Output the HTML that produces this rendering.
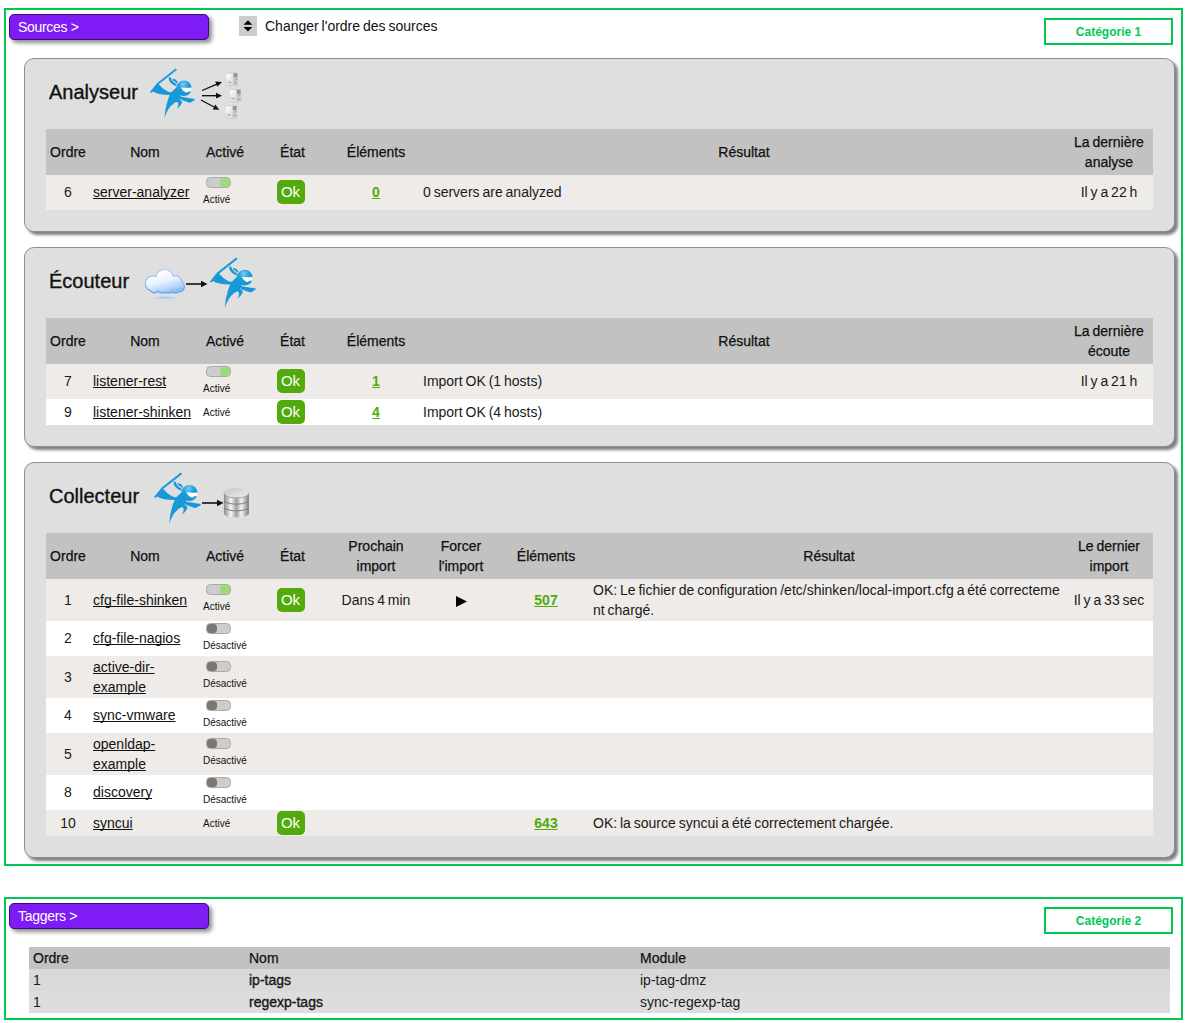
<!DOCTYPE html>
<html><head><meta charset="utf-8">
<style>
*{box-sizing:border-box}
html,body{margin:0;padding:0;background:#fff;width:1198px;height:1023px;overflow:hidden}
body{font-family:"Liberation Sans",sans-serif;font-size:14px;line-height:20px;color:#1a1a1a;position:relative;word-spacing:-1px}
.box{position:absolute;left:4px;width:1179px;border:2px solid #00c853}
.btn{position:absolute;left:9px;width:200px;height:26px;background:#7f1cf6;border:1px solid #3c0a7c;border-radius:5px;box-shadow:3px 3px 4px rgba(0,0,0,.45);color:#fff;font-size:14px;line-height:20px;padding:2px 0 0 8px;word-spacing:0;letter-spacing:-0.3px}
.cat{word-spacing:0;position:absolute;left:1044px;width:129px;height:27px;border:2px solid #00c853;color:#00c853;font-weight:bold;font-size:12px;line-height:20px;text-align:center;padding-top:2px}
.panel{position:absolute;left:24px;width:1151px;background:#dfdfdf;border:1px solid #8f8f8f;border-radius:10px;box-shadow:3px 3px 3px rgba(0,0,0,.5)}
.ptitle{position:absolute;left:24px;font-size:20px;line-height:24px;color:#111;-webkit-text-stroke:0.35px #111}
.icon{position:absolute}
table.src{position:absolute;left:21px;width:1107px;border-collapse:collapse;table-layout:fixed}
table.src th{-webkit-text-stroke:0.25px #111;background:#c2c2c2;font-weight:normal;height:46px;padding:0;vertical-align:middle;text-align:center;color:#111}
table.src td{padding:0;vertical-align:middle;text-align:center}
table.src tr.s td{background:#efebe8}
table.src tr.w td{background:#fff}
td.nm{text-align:left !important;padding-left:3px !important}
td.nm a{color:#111;text-decoration:underline;text-underline-offset:1px;text-decoration-skip-ink:none}
td.res{text-align:left !important;padding-left:6px !important}
tr.h35 td{padding-bottom:1px}
tr.h35 td.act{padding-bottom:0}
tr.h35 td.st{padding-bottom:1px}
tr.h42 td.act{padding-bottom:1px}
td.act{text-align:left !important;padding-left:3px !important}
.tg{display:block;width:25px;height:11px;margin:1px 0 2px 3px;border:1px solid #a9a9a9;border-radius:4.5px;background:#cdcdcd;position:relative}
.tg i{position:absolute;top:0;width:10px;height:9px;border-radius:3.5px}
.tg.on i{right:0;background:#9ddb78}
.tg.off i{left:0;background:#7b7670}
.lab{display:block;font-size:10px;line-height:19px;color:#111}
.ok{position:relative;left:-2px;display:inline-block;width:28px;height:24px;background:#52aa0c;border-radius:5px;color:#fff;font-size:15px;line-height:24px;text-align:center;vertical-align:middle}
a.num{color:#52aa0c;font-weight:bold;text-decoration:underline;text-decoration-skip-ink:none}
table.tag{position:absolute;left:23px;top:48px;width:1141px;border-collapse:collapse;table-layout:fixed}
table.tag th{-webkit-text-stroke:0.25px #111;background:#c2c2c2;font-weight:normal;text-align:left;height:22px;padding:0 0 0 4px;color:#111;line-height:20px}
table.tag td{height:22px;padding:0 0 0 4px;line-height:20px}
table.tag tr.r1 td{background:#d9d9d9}
td.md{-webkit-text-stroke:0.35px #111}
table.tag tr.r2 td{background:#dddddd}
</style></head>
<body>
<svg width="0" height="0" style="position:absolute">
<defs>
<radialGradient id="hg" cx="0.45" cy="0.25" r="0.75"><stop offset="0" stop-color="#7fcdf2"/><stop offset="0.45" stop-color="#1e9edc"/><stop offset="1" stop-color="#1593d2"/></radialGradient>
<linearGradient id="cg" x1="0" y1="0" x2="0" y2="1"><stop offset="0" stop-color="#ffffff"/><stop offset="0.55" stop-color="#e4efff"/><stop offset="1" stop-color="#9cc3fb"/></linearGradient>
<radialGradient id="cs" cx="0.5" cy="0.5" r="0.5"><stop offset="0" stop-color="#8fb8f6"/><stop offset="1" stop-color="#dfdfdf" stop-opacity="0"/></radialGradient>
<linearGradient id="dbg" x1="0" y1="0" x2="1" y2="0"><stop offset="0" stop-color="#8a8a8a"/><stop offset="0.12" stop-color="#b5b5b5"/><stop offset="0.28" stop-color="#f6f6f6"/><stop offset="0.5" stop-color="#a0a0a0"/><stop offset="0.7" stop-color="#f2f2f2"/><stop offset="0.9" stop-color="#a5a5a5"/><stop offset="1" stop-color="#7c7c7c"/></linearGradient>
<linearGradient id="dbt" x1="0" y1="0" x2="1" y2="1"><stop offset="0" stop-color="#c4c4c4"/><stop offset="0.6" stop-color="#dedede"/><stop offset="1" stop-color="#ececec"/></linearGradient>
<symbol id="ninja" viewBox="0 0 55 55">
<g fill="#1799d8">
<path d="M31.2 2.5 L32.6 3.9 L13.6 18.9 L11.9 17.7 Z"/>
<path d="M12.2 17.6 L14.2 18.8 Q17.5 23 22.6 25.8 Q25 26.9 27.2 26.6 L28.5 25 L32.5 21.5 L37 31.5 L35 33.6 Q38.3 36 37.6 37.8 Q36 41.2 32.4 43.8 Q34.3 40.2 34 37.9 Q33.4 36.6 32 36.6 Q28.5 37.8 24.4 43 Q21.6 47.5 19.8 53 Q20.4 43.5 23.2 34.6 L25.2 29.4 Q20.5 29.6 15.6 28.8 Q11 27.9 8 26 L6.4 27.4 L5 26.4 Z"/>
<path d="M34.8 31 Q43 32.3 50.9 33.5 L50.5 34.8 Q48.8 35.4 47.6 36.4 Q46.2 37.6 44.9 37.3 Q41 36 36.2 34.2 Z"/>
<path d="M24.4 11.2 Q26.6 11 26.8 13 Q27.6 16 32.2 18.4 L31.6 20.4 Q26 18.4 24.3 14 Z"/>
<path d="M28.3 13 Q30.9 12.6 33.4 16.2 L32.3 17.8 Q30.6 15.3 28.3 14.8 Z"/>
</g>
<circle cx="39.7" cy="22.6" r="7.9" fill="url(#hg)"/>
<path d="M36.6 21.8 Q42 22.6 47.7 22 Q48 24.8 46.7 25.6 Q45.4 26.2 44.6 25.6 Q43.6 27.4 41.8 27 Q38.5 25.8 36.6 21.8 Z" fill="#fff"/>
</symbol>
<symbol id="srv" viewBox="0 0 14 14">
<linearGradient id="sfg" x1="0" y1="0" x2="1" y2="1"><stop offset="0" stop-color="#ffffff"/><stop offset="1" stop-color="#dcdcdc"/></linearGradient>
<ellipse cx="8" cy="13.2" rx="6" ry="0.8" fill="#c4c4c4"/>
<path d="M0.4 1.6 Q0.4 0.6 1.6 0.5 L12 0.3 Q13 0.4 13 1.4 L13 12.6 Q13 13.4 12 13.4 L1.4 13.4 Q0.4 13.4 0.4 12.4 Z" fill="#d2d2d2"/>
<rect x="1.2" y="1.6" width="7" height="7.4" fill="url(#sfg)"/>
<rect x="1.2" y="9" width="7" height="3.6" fill="#e6e6e6"/>
<rect x="2.2" y="10" width="5" height="0.6" fill="#a8a8a8"/>
<rect x="4.4" y="9.6" width="1" height="1.2" fill="#777"/>
<rect x="8.5" y="1.2" width="3.8" height="4.2" fill="#939393"/>
<rect x="8.5" y="5.4" width="3.8" height="7.2" fill="#c9c9c9"/>
<rect x="10.4" y="5.8" width="1.6" height="1.8" fill="#8fbf8f"/>
<rect x="8.5" y="10.4" width="3.8" height="1" fill="#a5a5a5"/>
</symbol>
</defs></svg>

<div class="box" style="top:8px;height:858px">
  <div class="btn" style="left:3px;top:4px">Sources &gt;</div>
  <div style="position:absolute;left:233px;top:6px;width:18px;height:20px;background:#ccc">
    <svg width="18" height="20" viewBox="0 0 18 20" style="position:absolute;left:0;top:0"><path d="M4.5 8.7 L9 4.3 L13.2 8.7 Z M4.5 11 L13.2 11 L9 15.4 Z" fill="#000"/></svg>
  </div>
  <div style="position:absolute;left:259px;top:6px;font-size:14px;line-height:20px;color:#111">Changer l'ordre des sources</div>
  <div class="cat" style="left:1038px;top:8px">Catégorie 1</div>
</div>

<!-- Panel 1: Analyseur -->
<div class="panel" style="top:58px;height:174px">
  <div class="ptitle" style="top:21px">Analyseur</div>
  <table class="src" style="top:70px">
    <colgroup><col style="width:44px"><col style="width:110px"><col style="width:50px"><col style="width:85px"><col style="width:82px"><col style="width:648px"><col style="width:88px"></colgroup>
    <tr><th>Ordre</th><th>Nom</th><th>Activé</th><th>État</th><th>Éléments</th><th style="padding-left:6px">Résultat</th><th>La dernière<br>analyse</th></tr>
    <tr class="s h35" style="height:35px"><td>6</td><td class="nm"><a>server-analyzer</a></td><td class="act"><span class="tg on"><i></i></span><span class="lab">Activé</span></td><td class="st"><span class="ok">Ok</span></td><td><a class="num">0</a></td><td class="res">0 servers are analyzed</td><td>Il y a 22 h</td></tr>
  </table>
</div>

<!-- Panel 2: Ecouteur -->
<div class="panel" style="top:247px;height:200px">
  <div class="ptitle" style="top:21px">Écouteur</div>
  <table class="src" style="top:70px">
    <colgroup><col style="width:44px"><col style="width:110px"><col style="width:50px"><col style="width:85px"><col style="width:82px"><col style="width:648px"><col style="width:88px"></colgroup>
    <tr><th>Ordre</th><th>Nom</th><th>Activé</th><th>État</th><th>Éléments</th><th style="padding-left:6px">Résultat</th><th>La dernière<br>écoute</th></tr>
    <tr class="s h35" style="height:35px"><td>7</td><td class="nm"><a>listener-rest</a></td><td class="act"><span class="tg on"><i></i></span><span class="lab">Activé</span></td><td class="st"><span class="ok">Ok</span></td><td><a class="num">1</a></td><td class="res">Import OK (1 hosts)</td><td>Il y a 21 h</td></tr>
    <tr class="w" style="height:26px"><td>9</td><td class="nm"><a>listener-shinken</a></td><td class="act"><span class="lab">Activé</span></td><td class="st"><span class="ok">Ok</span></td><td><a class="num">4</a></td><td class="res">Import OK (4 hosts)</td><td></td></tr>
  </table>
</div>

<!-- Panel 3: Collecteur -->
<div class="panel" style="top:462px;height:396px">
  <div class="ptitle" style="top:21px">Collecteur</div>
  <table class="src" style="top:70px">
    <colgroup><col style="width:44px"><col style="width:110px"><col style="width:50px"><col style="width:85px"><col style="width:82px"><col style="width:88px"><col style="width:82px"><col style="width:478px"><col style="width:88px"></colgroup>
    <tr><th>Ordre</th><th>Nom</th><th>Activé</th><th>État</th><th>Prochain<br>import</th><th>Forcer<br>l'import</th><th>Éléments</th><th style="padding-left:6px">Résultat</th><th>Le dernier<br>import</th></tr>
    <tr class="s h42" style="height:42px"><td>1</td><td class="nm"><a>cfg-file-shinken</a></td><td class="act"><span class="tg on"><i></i></span><span class="lab">Activé</span></td><td class="st"><span class="ok">Ok</span></td><td>Dans 4 min</td><td><svg width="11" height="11" viewBox="0 0 11 11" style="vertical-align:middle"><path d="M0 0 L11 5.5 L0 11 Z" fill="#000"/></svg></td><td><a class="num">507</a></td><td class="res" style="white-space:nowrap">OK: Le fichier de configuration /etc/shinken/local-import.cfg a été correcteme<br>nt chargé.</td><td>Il y a 33 sec</td></tr>
    <tr class="w h35" style="height:35px"><td>2</td><td class="nm"><a>cfg-file-nagios</a></td><td class="act"><span class="tg off"><i></i></span><span class="lab">Désactivé</span></td><td></td><td></td><td></td><td></td><td></td><td></td></tr>
    <tr class="s h42" style="height:42px"><td>3</td><td class="nm"><a>active-dir-<br>example</a></td><td class="act"><span class="tg off"><i></i></span><span class="lab">Désactivé</span></td><td></td><td></td><td></td><td></td><td></td><td></td></tr>
    <tr class="w h35" style="height:35px"><td>4</td><td class="nm"><a>sync-vmware</a></td><td class="act"><span class="tg off"><i></i></span><span class="lab">Désactivé</span></td><td></td><td></td><td></td><td></td><td></td><td></td></tr>
    <tr class="s h42" style="height:42px"><td>5</td><td class="nm"><a>openldap-<br>example</a></td><td class="act"><span class="tg off"><i></i></span><span class="lab">Désactivé</span></td><td></td><td></td><td></td><td></td><td></td><td></td></tr>
    <tr class="w h35" style="height:35px"><td>8</td><td class="nm"><a>discovery</a></td><td class="act"><span class="tg off"><i></i></span><span class="lab">Désactivé</span></td><td></td><td></td><td></td><td></td><td></td><td></td></tr>
    <tr class="s" style="height:26px"><td>10</td><td class="nm"><a>syncui</a></td><td class="act"><span class="lab">Activé</span></td><td class="st"><span class="ok">Ok</span></td><td></td><td></td><td><a class="num">643</a></td><td class="res">OK: la source syncui a été correctement chargée.</td><td></td></tr>
  </table>
</div>

<div class="box" style="top:897px;height:123px">
  <div class="btn" style="left:3px;top:4px">Taggers &gt;</div>
  <div class="cat" style="left:1038px;top:8px">Catégorie 2</div>
  <table class="tag">
    <colgroup><col style="width:216px"><col style="width:391px"><col style="width:534px"></colgroup>
    <tr><th>Ordre</th><th>Nom</th><th>Module</th></tr>
    <tr class="r1"><td>1</td><td class="md">ip-tags</td><td>ip-tag-dmz</td></tr>
    <tr class="r2"><td>1</td><td class="md">regexp-tags</td><td>sync-regexp-tag</td></tr>
  </table>
</div>


<!-- icons -->
<svg class="icon" style="left:145px;top:66px" width="54" height="54"><use href="#ninja" width="54" height="54"/></svg>
<svg class="icon" style="left:199px;top:70px" width="45" height="50" viewBox="0 0 45 50">
<g stroke="#111" stroke-width="1.35" fill="none"><line x1="3" y1="20.5" x2="18" y2="14.2"/><line x1="3" y1="25.7" x2="18" y2="25.7"/><line x1="2" y1="30" x2="15" y2="37"/></g>
<g fill="#111"><path d="M23 12 L16.2 11.6 L18.3 16.8 Z"/><path d="M23 25.7 L17 22.8 L17 28.6 Z"/><path d="M20.2 39.8 L16.3 34.6 L13.8 39.4 Z"/></g>
<use href="#srv" x="26" y="2" width="14" height="14"/>
<use href="#srv" x="29.3" y="18.5" width="14" height="14"/>
<use href="#srv" x="25.3" y="34.8" width="14" height="14"/>
</svg>

<svg class="icon" style="left:144px;top:266px" width="44" height="38" viewBox="0 0 44 38">
<defs>
<linearGradient id="cg2" gradientUnits="userSpaceOnUse" x1="14" y1="6" x2="20" y2="28"><stop offset="0" stop-color="#ffffff"/><stop offset="0.45" stop-color="#eaf3fe"/><stop offset="0.8" stop-color="#b9d5fb"/><stop offset="1" stop-color="#8dbbf7"/></linearGradient>
<linearGradient id="co2" gradientUnits="userSpaceOnUse" x1="0" y1="4" x2="0" y2="28"><stop offset="0" stop-color="#a9cdf8"/><stop offset="1" stop-color="#4f97f0"/></linearGradient>
<radialGradient id="cs2" cx="0.5" cy="0.5" r="0.5"><stop offset="0" stop-color="#a6c6fb"/><stop offset="0.6" stop-color="#bfd4f6"/><stop offset="1" stop-color="#dfdfdf" stop-opacity="0"/></radialGradient>
</defs>
<ellipse cx="21.5" cy="31.8" rx="14.5" ry="2" fill="url(#cs2)"/>
<g fill="url(#co2)"><circle cx="8.8" cy="17.5" r="8.0"/><circle cx="20.6" cy="12.6" r="9.6"/><circle cx="31" cy="16.8" r="7.6"/><circle cx="35.2" cy="20.6" r="5.8"/><circle cx="10.5" cy="22" r="5.4"/><circle cx="18" cy="22.8" r="4.8"/><circle cx="25.5" cy="22.8" r="4.8"/><circle cx="31.5" cy="22.2" r="5.2"/><circle cx="22" cy="18" r="9.5"/></g>
<g fill="url(#cg2)"><circle cx="8.8" cy="17.5" r="7"/><circle cx="20.6" cy="12.6" r="8.6"/><circle cx="31" cy="16.8" r="6.6"/><circle cx="35.2" cy="20.6" r="4.8"/><circle cx="10.5" cy="22" r="4.4"/><circle cx="18" cy="22.8" r="3.8"/><circle cx="25.5" cy="22.8" r="3.8"/><circle cx="31.5" cy="22.2" r="4.2"/><circle cx="22" cy="18" r="8.5"/></g>
</svg>
<svg class="icon" style="left:185px;top:279px" width="24" height="10" viewBox="0 0 24 10"><line x1="1" y1="5" x2="17" y2="5" stroke="#111" stroke-width="1.6"/><path d="M22.5 5 L16 1.8 L16 8.2 Z" fill="#111"/></svg>
<svg class="icon" style="left:205px;top:255px" width="55" height="55"><use href="#ninja" width="55" height="55"/></svg>

<svg class="icon" style="left:149px;top:470px" width="56" height="56"><use href="#ninja" width="56" height="56"/></svg>
<svg class="icon" style="left:200px;top:498px" width="25" height="10" viewBox="0 0 25 10"><line x1="2" y1="5" x2="18" y2="5" stroke="#111" stroke-width="1.6"/><path d="M23.5 5 L17 1.8 L17 8.2 Z" fill="#111"/></svg>
<svg class="icon" style="left:222px;top:486px" width="30" height="33" viewBox="0 0 30 33">
<path d="M1.9 6.8 L1.9 27.2 Q2 31.2 14.4 31.2 Q26.8 31.2 26.9 27.2 L26.9 6.8 Z" fill="url(#dbg)"/>
<path d="M1.9 15.6 Q14.4 21 26.9 15.6" stroke="#7d7d7d" stroke-width="1" fill="none"/>
<path d="M1.9 22.4 Q14.4 27.6 26.9 22.4" stroke="#7d7d7d" stroke-width="1" fill="none"/>
<ellipse cx="14.4" cy="6.9" rx="12.5" ry="4.9" fill="url(#dbt)"/>
<path d="M1.9 6.9 Q2.5 11.8 14.4 11.8 Q26.3 11.8 26.9 6.9" stroke="#9a9a9a" stroke-width="0.8" fill="none"/>
</svg>
</body></html>
